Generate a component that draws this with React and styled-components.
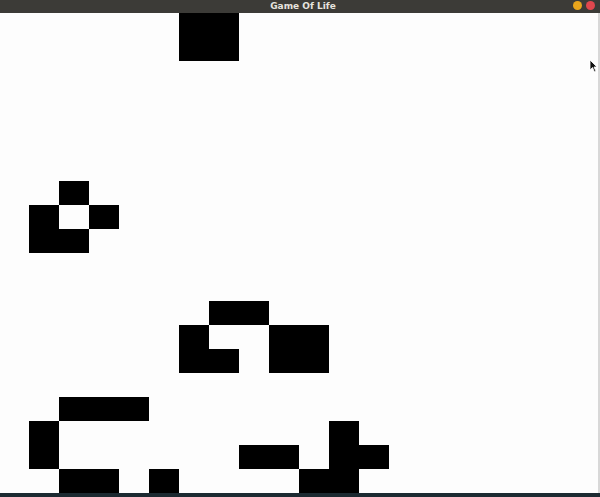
import styled, { createGlobalStyle } from "styled-components"

const GlobalStyle = createGlobalStyle`
  html, body {
    margin: 0;
    padding: 0;
    background: #1c2a31;
    overflow: hidden;
  }
`

const COLS = 20
const ROWS = 20

// live cells, row -> columns
const alive = {
  0: [6, 7],
  1: [6, 7],
  7: [2],
  8: [1, 3],
  9: [1, 2],
  12: [7, 8],
  13: [6, 9, 10],
  14: [6, 7, 9, 10],
  16: [2, 3, 4],
  17: [1, 11],
  18: [1, 8, 9, 11, 12],
  19: [2, 3, 5, 10, 11],
}

const Window = styled.div`
  position: relative;
  width: 600px;
  height: 497px;
  display: flex;
  flex-direction: column;
  background: #1c2a31;
`

const TitleBar = styled.div`
  height: 13px;
  flex-shrink: 0;
  background: #3c3b37;
  display: flex;
  align-items: center;
  justify-content: center;
  position: relative;
  font-family: "DejaVu Sans", "Liberation Sans", sans-serif;
  font-size: 9px;
  font-weight: bold;
  color: #e6e3de;
`

const Title = styled.span`
  margin-left: 6px;
  line-height: 13px;
`

const Controls = styled.div`
  position: absolute;
  right: 5px;
  top: 1px;
  display: flex;
  gap: 4px;
`

const Dot = styled.span`
  width: 9px;
  height: 9px;
  border-radius: 50%;
  background: ${(p) => p.color};
`

const Frame = styled.div`
  width: 600px;
  height: 480px;
  background: #fdfdfd;
  border-right: 2px solid #d8d8d8;
  box-sizing: border-box;
  overflow: hidden;
`

const Board = styled.div`
  margin-left: -1px;
  display: grid;
  grid-template-columns: repeat(${COLS}, 30px);
  grid-template-rows: repeat(${ROWS}, 24px);
`

const Cell = styled.div`
  background: ${(p) => (p.$alive ? "#000" : "transparent")};
`

const Cursor = styled.svg`
  position: absolute;
  left: 589px;
  top: 59px;
`

export default function App() {
  const cells = []
  for (let r = 0; r < ROWS; r++) {
    for (let c = 0; c < COLS; c++) {
      const on = (alive[r] || []).includes(c)
      cells.push(<Cell key={r + "-" + c} $alive={on} />)
    }
  }
  return (
    <>
      <GlobalStyle />
      <Window>
        <TitleBar>
          <Title>Game Of Life</Title>
          <Controls>
            <Dot color="#e9a51c" />
            <Dot color="#e0474e" />
          </Controls>
        </TitleBar>
        <Frame>
          <Board>{cells}</Board>
        </Frame>
        <Cursor width="9" height="14" viewBox="0 0 9 14">
          <path d="M1 1 L1 11 L3.5 8.5 L5.5 13 L7 12.3 L5 8 L8 8 Z" fill="#111" stroke="#fff" strokeWidth="0.8" />
        </Cursor>
      </Window>
    </>
  )
}
